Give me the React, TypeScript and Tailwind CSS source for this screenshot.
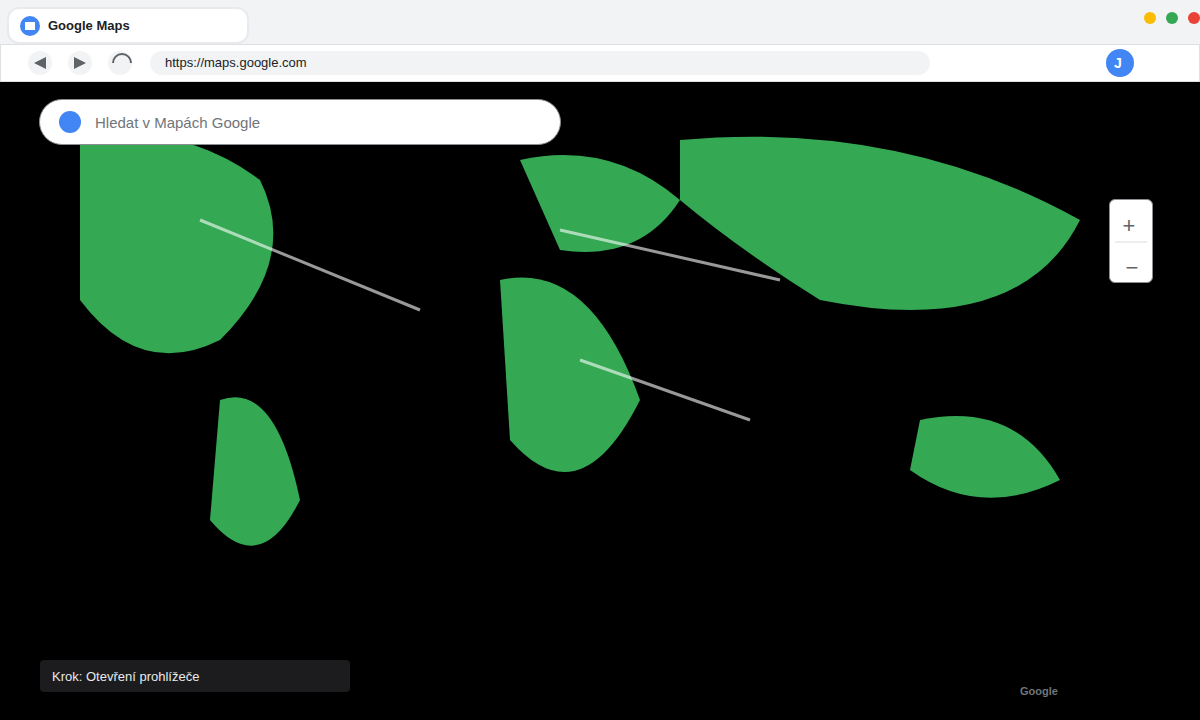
import React from 'react';

const font = { fontFamily: '"Liberation Sans", Arial, sans-serif' };

function MapShapes() {
  return (
    <svg className="absolute inset-0 h-[638px] w-[1200px]" viewBox="0 82 1200 638">
      <g fill="#34a853">
        <path d="M80 140 Q180 120 260 180 Q300 260 220 340 Q140 380 80 300 Z" />
        <path d="M520 160 Q610 140 680 200 Q640 262 560 250 Z" />
        <path d="M680 140 Q900 120 1080 220 Q1020 340 820 300 Q740 250 680 200 Z" />
        <path d="M500 280 Q590 260 640 400 Q580 520 510 440 Z" />
        <path d="M220 400 Q275 380 300 500 Q260 580 210 520 Z" />
        <path d="M920 420 Q1015 400 1060 480 Q980 520 910 470 Z" />
      </g>
      <g stroke="#ffffff" strokeOpacity="0.6" strokeWidth="3" fill="none">
        <path d="M200 220 L420 310" />
        <path d="M560 230 L780 280" />
        <path d="M580 360 L750 420" />
      </g>
    </svg>
  );
}

export default function App() {
  return (
    <div className="flex h-[720px] w-[1200px] flex-col overflow-hidden bg-black" style={font}>
      {/* tab bar */}
      <div className="flex h-[44px] shrink-0 items-end justify-between bg-[#f1f3f4] pl-[7px]">
        <div className="flex h-[37px] w-[242px] items-center gap-2 rounded-xl border-2 border-[#e8eaed] bg-white pl-[11px]">
          <div className="flex h-5 w-5 items-center justify-center rounded-full bg-[#4285f4]">
            <div className="h-2 w-2.5 bg-white" />
          </div>
          <span className="text-[13px] font-bold text-[#202124]">Google Maps</span>
        </div>
        <div className="mb-[20px] flex gap-[10px]">
          <div className="h-3 w-3 rounded-full bg-[#fbbc05]" />
          <div className="h-3 w-3 rounded-full bg-[#34a853]" />
          <div className="h-3 w-3 rounded-full bg-[#ea4335]" />
        </div>
      </div>

      {/* toolbar */}
      <div className="flex h-[38px] shrink-0 items-center border border-[#e0e0e0] bg-white pl-[27px]">
        <div className="flex gap-4">
          <div className="flex h-6 w-6 items-center justify-center rounded-full bg-[#f1f3f4] text-[#5f6368]">
            <svg width="12" height="12" viewBox="0 0 12 12"><path d="M0 6 L12 0 V12 Z" fill="currentColor" /></svg>
          </div>
          <div className="flex h-6 w-6 items-center justify-center rounded-full bg-[#f1f3f4] text-[#5f6368]">
            <svg width="12" height="12" viewBox="0 0 12 12"><path d="M12 6 L0 0 V12 Z" fill="currentColor" /></svg>
          </div>
          <div className="flex h-6 w-6 items-center justify-center rounded-full bg-[#f1f3f4]">
            <svg width="24" height="24" viewBox="0 0 24 24" fill="none"><path d="M5 12 A9 9 0 0 1 23 12" stroke="#5f6368" strokeWidth="2" /></svg>
          </div>
        </div>
        <div className="ml-[18px] flex h-6 w-[780px] items-center rounded-full bg-[#f1f3f4] pl-[15px] text-[13px] text-[#202124]">
          https://maps.google.com
        </div>
        <div className="ml-[176px] flex h-7 w-7 items-center justify-center rounded-full bg-[#4285f4] pr-1 text-sm font-bold text-white">
          J
        </div>
      </div>

      {/* map */}
      <div className="relative flex-1 bg-black">
        <MapShapes />

        <div className="absolute left-[39px] top-[17px] flex h-[46px] w-[522px] items-center rounded-full border border-[#8a8d91] bg-white pl-[19px]">
          <div className="h-[22px] w-[22px] rounded-full bg-[#4285f4]" />
          <span className="ml-[14px] pt-0.5 text-[15px] text-[#70757a]">Hledat v Mapách Google</span>
        </div>

        <div className="absolute left-[1109px] top-[117px] flex h-[84px] w-[44px] flex-col items-center rounded-md border border-[#8a8d91] bg-white text-[#5f6368]">
          <div className="flex h-[41px] w-full items-center justify-center pr-[4px] pt-[10px] text-[22px] leading-none">+</div>
          <div className="h-[2px] w-8 bg-[#eeeeee]" />
          <div className="flex h-[39px] w-full items-center justify-center pl-[2px] pt-[10px] text-[22px] leading-none">−</div>
        </div>

        <div className="absolute left-10 top-[578px] flex h-8 w-[310px] items-center rounded bg-[#1c1c1e] pl-3 pt-px text-[13px] text-[#e8eaed]">
          Krok: Otevření prohlížeče
        </div>

        <div className="absolute left-[1020px] top-[601px] text-[11px] font-bold text-[#70757a]">Google</div>
      </div>
    </div>
  );
}
